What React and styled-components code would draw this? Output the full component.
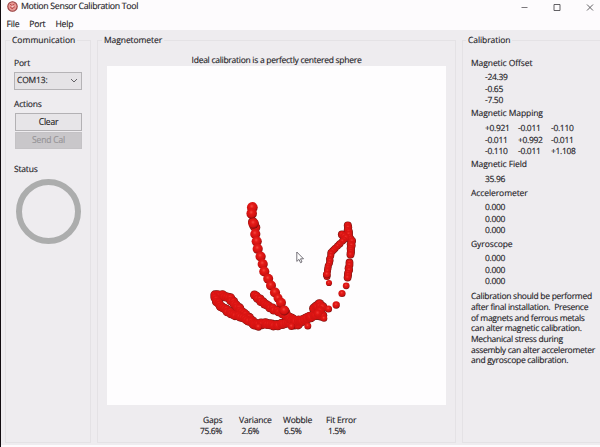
import React from "react";
import styled, { createGlobalStyle } from "styled-components";

const GlobalStyle = createGlobalStyle`
  html, body { margin: 0; padding: 0; overflow: hidden; }
  *, *::before, *::after { box-sizing: border-box; }
  button { font: inherit; letter-spacing: inherit; }
`;

const Window = styled.div`
  display: flex;
  flex-direction: column;
  width: 600px;
  height: 447px;
  border-left: 1px solid #120c10;
  background: #fdfbfd;
  color: #252328;
  font: 8.5px/11px "Open Sans", "Noto Sans", sans-serif;
  text-rendering: geometricPrecision;
  -webkit-text-stroke: 0.15px;
  letter-spacing: -0.19px;
  white-space: pre;
  overflow: hidden;
`;

const TitleBar = styled.header`
  display: flex;
  align-items: center;
  height: 13px;
  padding: 0 6px 0 6px;
  font-size: 8.8px;
  letter-spacing: -0.32px;
`;

const Title = styled.span`
  flex: 1;
  margin-left: 3px;
`;

const WindowControls = styled.div`
  display: flex;
  gap: 25px;
  svg { display: block; }
`;

const MenuBar = styled.nav`
  display: flex;
  height: 17px;
  padding: 6px 0 0 5.5px;
  gap: 10px;
  font-size: 8.6px;
  letter-spacing: -0.2px;
`;

const Body = styled.main`
  display: grid;
  grid-template-columns: 86px 359px 1fr;
  column-gap: 6px;
  height: 415px;
  padding: 5px 0 2px 4px;
  background: #eeecef;
`;

const Group = styled.fieldset`
  display: flex;
  flex-direction: column;
  min-width: 0;
  height: 408px;
  margin: 0;
  padding: ${(p) => p.$padding};
  border: 1px solid #e4e2e5;
  ${(p) => p.$openRight && "border-right: 0;"}
`;

const Legend = styled.legend`
  height: 11px;
  margin-left: ${(p) => p.$left}px;
  padding: 0 2px;
  line-height: 12px;
  letter-spacing: ${(p) => p.$spacing || -0.08}px;
`;

const Label = styled.div`
  height: 11px;
  margin-top: ${(p) => p.$top}px;
`;

const PortSelect = styled.div`
  display: flex;
  align-items: center;
  justify-content: space-between;
  width: 68px;
  height: 18px;
  margin-top: 3px;
  padding: 0 3px 1px 2px;
  border: 1px solid #b5b3b6;
  background: #e5e3e6;
`;

const ActionButton = styled.button`
  width: 67px;
  height: ${(p) => (p.disabled ? 17 : 18)}px;
  margin: ${(p) => (p.disabled ? 1 : 3)}px 0 0 1px;
  padding: 0 0 1px;
  border: 1px solid ${(p) => (p.disabled ? "#c4c2c5" : "#b3b1b4")};
  background: ${(p) => (p.disabled ? "#c9c7ca" : "#e7e5e8")};
  color: ${(p) => (p.disabled ? "#969497" : "#1f1d21")};
`;

const StatusRing = styled.div`
  width: 65px;
  height: 65px;
  margin: 4px 0 0 2px;
  border: 6.5px solid #acadad;
  border-radius: 50%;
`;

const Caption = styled.div`
  height: 11px;
  margin: 8.5px 0 0 0;
  text-align: center;
  line-height: 12px;
  letter-spacing: -0.27px;
`;

const Plot = styled.div`
  width: 339px;
  height: 339px;
  margin-left: 9px;
  background: #fefdfe;
  svg { display: block; }
`;

const Stats = styled.div`
  display: grid;
  grid-template-columns: 40px 44px 43px 45px;
  margin: 10.5px 0 0 101px;
`;

const Stat = styled.div`
  line-height: 11px;
`;

const StatName = styled.div`
  padding-left: ${(p) => p.$indent || 0}px;
`;

const StatValue = styled.div`
  padding-left: ${(p) => p.$indent || 0}px;
  letter-spacing: -0.36px;
`;

const Reading = styled.section`
  display: block;
`;

const ReadingTitle = styled.div`
  height: 16.9px;
  line-height: 16.9px;
  letter-spacing: -0.08px;
`;

const ReadingRow = styled.div`
  display: grid;
  grid-template-columns: repeat(3, 33px);
  height: 11.35px;
  padding-left: 14px;
  line-height: 11.35px;
  letter-spacing: -0.32px;
`;

const Advice = styled.p`
  margin: 5px 0 0;
  line-height: 10.67px;
  letter-spacing: -0.28px;
`;

const chains = [
  { r: 4.3, step: 2.2, pts: [[215, 294.5], [222, 294.8], [230, 298], [236, 305], [242, 311], [247, 316], [254, 322]] },
  { r: 4.2, step: 2.2, pts: [[215, 297], [219, 304.5], [226, 309.5], [233, 314], [240, 316], [249, 320], [257, 325]] },
  { r: 4.5, step: 2.3, pts: [[254, 324], [265, 323], [276, 325], [288, 322], [298, 324]] },
  { r: 4.1, step: 2.2, pts: [[254.5, 294.5], [263, 302], [272, 308], [281, 312], [288, 316], [296, 320]] },
  { r: 4.4, step: 2.4, pts: [[284, 310], [288, 317], [293, 321]] },
  { r: 4.4, step: 2.4, pts: [[252.8, 221.5], [255.5, 227]] },
  { r: 4.9, step: 2.3, pts: [[292, 320], [300, 321], [309, 317], [318, 313], [322, 315]] },
  { r: 4.5, step: 2.5, pts: [[314, 308], [319, 304], [322, 307], [318, 313]] },
  { r: 3.6, step: 2.3, pts: [[347.8, 225], [348.5, 234], [351.5, 241], [350.5, 254]] },
  { r: 3.7, step: 2.4, pts: [[342, 234], [346, 237]] },
  { r: 3.1, step: 2.2, pts: [[344, 239], [337, 246], [331, 252]] },
  { r: 3.1, step: 2.3, pts: [[331, 253], [329, 263], [327, 271], [327, 276]] },
  { r: 3.5, step: 2.3, pts: [[349.5, 262], [348.7, 270], [347.6, 277]] },
];

const singles = [
  [252.3, 207, 5.4], [251.7, 213, 5.3], [253.5, 223, 5.2], [255.3, 233.5, 5.1],
  [256.7, 240.8, 5.1], [257.7, 248.3, 5.1], [260.6, 256, 5.1], [262.7, 263.5, 5.1],
  [264.3, 271, 5.1], [268.2, 278.3, 5], [271, 285, 5], [275, 292, 5.1],
  [278, 297.5, 4.5], [281, 302.3, 5], [284.3, 310, 5],
  [327, 274, 3.8], [329, 282.5, 3.1], [346.2, 285.3, 3.4], [342, 293, 3.6],
  [336.2, 304.5, 3.7], [328.5, 308.5, 3.6], [324, 318, 3.3], [307.8, 325.5, 3.5],
  [291.5, 326, 3.6], [258.5, 326.5, 3.7],
];

const along = ({ pts, step, r }) => {
  const out = [];
  pts.slice(1).forEach(([x, y], i) => {
    const [px, py] = pts[i];
    const count = Math.max(1, Math.round(Math.hypot(x - px, y - py) / step));
    for (let k = 0; k < count; k += 1) {
      const t = k / count;
      const wobble = Math.sin((i * 5 + k) * 2.7) * 0.55;
      out.push([px + (x - px) * t + wobble, py + (y - py) * t - wobble, r]);
    }
  });
  const [ex, ey] = pts[pts.length - 1];
  out.push([ex, ey, r]);
  return out;
};

const merged = chains.flatMap(along);

const MagneticCloud = () => (
  <svg width="339" height="339" viewBox="107 65.5 339 339">
    <defs>
      <radialGradient id="bead" cx="45%" cy="38%" r="62%">
        <stop offset="0" stopColor="#f34840" />
        <stop offset=".3" stopColor="#e51b18" />
        <stop offset=".72" stopColor="#d11110" />
        <stop offset="1" stopColor="#780d0c" />
      </radialGradient>
      <radialGradient id="merged" cx="45%" cy="40%" r="60%">
        <stop offset="0" stopColor="#ee3530" />
        <stop offset=".4" stopColor="#e01513" />
        <stop offset="1" stopColor="#cc1211" />
      </radialGradient>
    </defs>
    {merged.map(([x, y, r], i) => (
      <circle key={`rim-${i}`} cx={x} cy={y} r={r + 0.4} fill="#7c1713" />
    ))}
    {merged.map(([x, y, r], i) => (
      <circle key={`fill-${i}`} cx={x} cy={y} r={r - 0.2} fill="url(#merged)" />
    ))}
    {singles.map(([x, y, r], i) => (
      <circle key={`bead-${i}`} cx={x} cy={y} r={r} fill="url(#bead)" />
    ))}
    <path
      d="M296.8 251.5v9.4l2.2-2 1.5 3.3 1.5-.7-1.5-3.2h3z"
      fill="#fff"
      stroke="#55525a"
      strokeWidth=".8"
    />
  </svg>
);

const AppIcon = () => (
  <svg width="11" height="11" viewBox="0 0 11 11">
    <circle cx="5.5" cy="5.5" r="4.7" fill="#e99a96" stroke="#963a3b" strokeWidth="1.1" />
    <path d="M3 3.2l2 1.3 2.6-1.6M3 5.8l2.2 1.9 2.7-2M5.2 4.5v3" fill="none" stroke="#b33f40" strokeWidth=".9" />
    <circle cx="5.4" cy="5.4" r="1" fill="#f9d5d1" />
  </svg>
);

const readings = [
  ["Magnetic Offset", [["-24.39"], ["-0.65"], ["-7.50"]]],
  ["Magnetic Mapping", [["+0.921", "-0.011", "-0.110"], ["-0.011", "+0.992", "-0.011"], ["-0.110", "-0.011", "+1.108"]]],
  ["Magnetic Field", [["35.96"]]],
  ["Accelerometer", [["0.000"], ["0.000"], ["0.000"]]],
  ["Gyroscope", [["0.000"], ["0.000"], ["0.000"]]],
];

const stats = [
  { name: "Gaps", value: "75.6%", nameIndent: 4, valueIndent: 1 },
  { name: "Variance", value: "2.6%", valueIndent: 2.5 },
  { name: "Wobble", value: "6.5%", valueIndent: 1 },
  { name: "Fit Error", value: "1.5%", valueIndent: 2 },
];

const advice = `Calibration should be performed
after final installation.  Presence
of magnets and ferrous metals
can alter magnetic calibration.
Mechanical stress during
assembly can alter accelerometer
and gyroscope calibration.`;

export default function App() {
  return (
    <>
      <GlobalStyle />
      <Window>
        <TitleBar>
          <AppIcon />
          <Title>Motion Sensor Calibration Tool</Title>
          <WindowControls>
            <svg width="7" height="8" viewBox="0 0 7 8"><path d="M.5 4.5h6" stroke="#59575b" strokeWidth=".8" /></svg>
            <svg width="8" height="8" viewBox="0 0 8 8"><path d="M1 1.5h6v6H1z" fill="none" stroke="#514f53" strokeWidth=".9" /></svg>
            <svg width="8" height="8" viewBox="0 0 8 8"><path d="M1 1.5l6 6M7 1.5l-6 6" stroke="#514f53" strokeWidth=".9" /></svg>
          </WindowControls>
        </TitleBar>
        <MenuBar>
          <span>File</span>
          <span>Port</span>
          <span>Help</span>
        </MenuBar>
        <Body>
          <Group $padding="0 0 0 8px">
            <Legend $left={-4} $spacing={0.02}>Communication</Legend>
            <Label $top={11.5}>Port</Label>
            <PortSelect>
              <span>COM13:</span>
              <svg width="8" height="5" viewBox="0 0 8 5"><path d="M1 1l3 3 3-3" fill="none" stroke="#555357" strokeWidth=".9" /></svg>
            </PortSelect>
            <Label $top={9}>Actions</Label>
            <ActionButton>Clear</ActionButton>
            <ActionButton disabled>Send Cal</ActionButton>
            <Label $top={15}>Status</Label>
            <StatusRing />
          </Group>
          <Group $padding="0">
            <Legend $left={4}>Magnetometer</Legend>
            <Caption>Ideal calibration is a perfectly centered sphere</Caption>
            <Plot><MagneticCloud /></Plot>
            <Stats>
              {stats.map((s) => (
                <Stat key={s.name}>
                  <StatName $indent={s.nameIndent}>{s.name}</StatName>
                  <StatValue $indent={s.valueIndent}>{s.value}</StatValue>
                </Stat>
              ))}
            </Stats>
          </Group>
          <Group $padding="9.5px 0 0 8px" $openRight>
            <Legend $left={-5}>Calibration</Legend>
            {readings.map(([title, rows]) => (
              <Reading key={title}>
                <ReadingTitle>{title}</ReadingTitle>
                {rows.map((row, i) => (
                  <ReadingRow key={i}>
                    {row.map((v, j) => <span key={j}>{v}</span>)}
                  </ReadingRow>
                ))}
              </Reading>
            ))}
            <Advice>{advice}</Advice>
          </Group>
        </Body>
      </Window>
    </>
  );
}
